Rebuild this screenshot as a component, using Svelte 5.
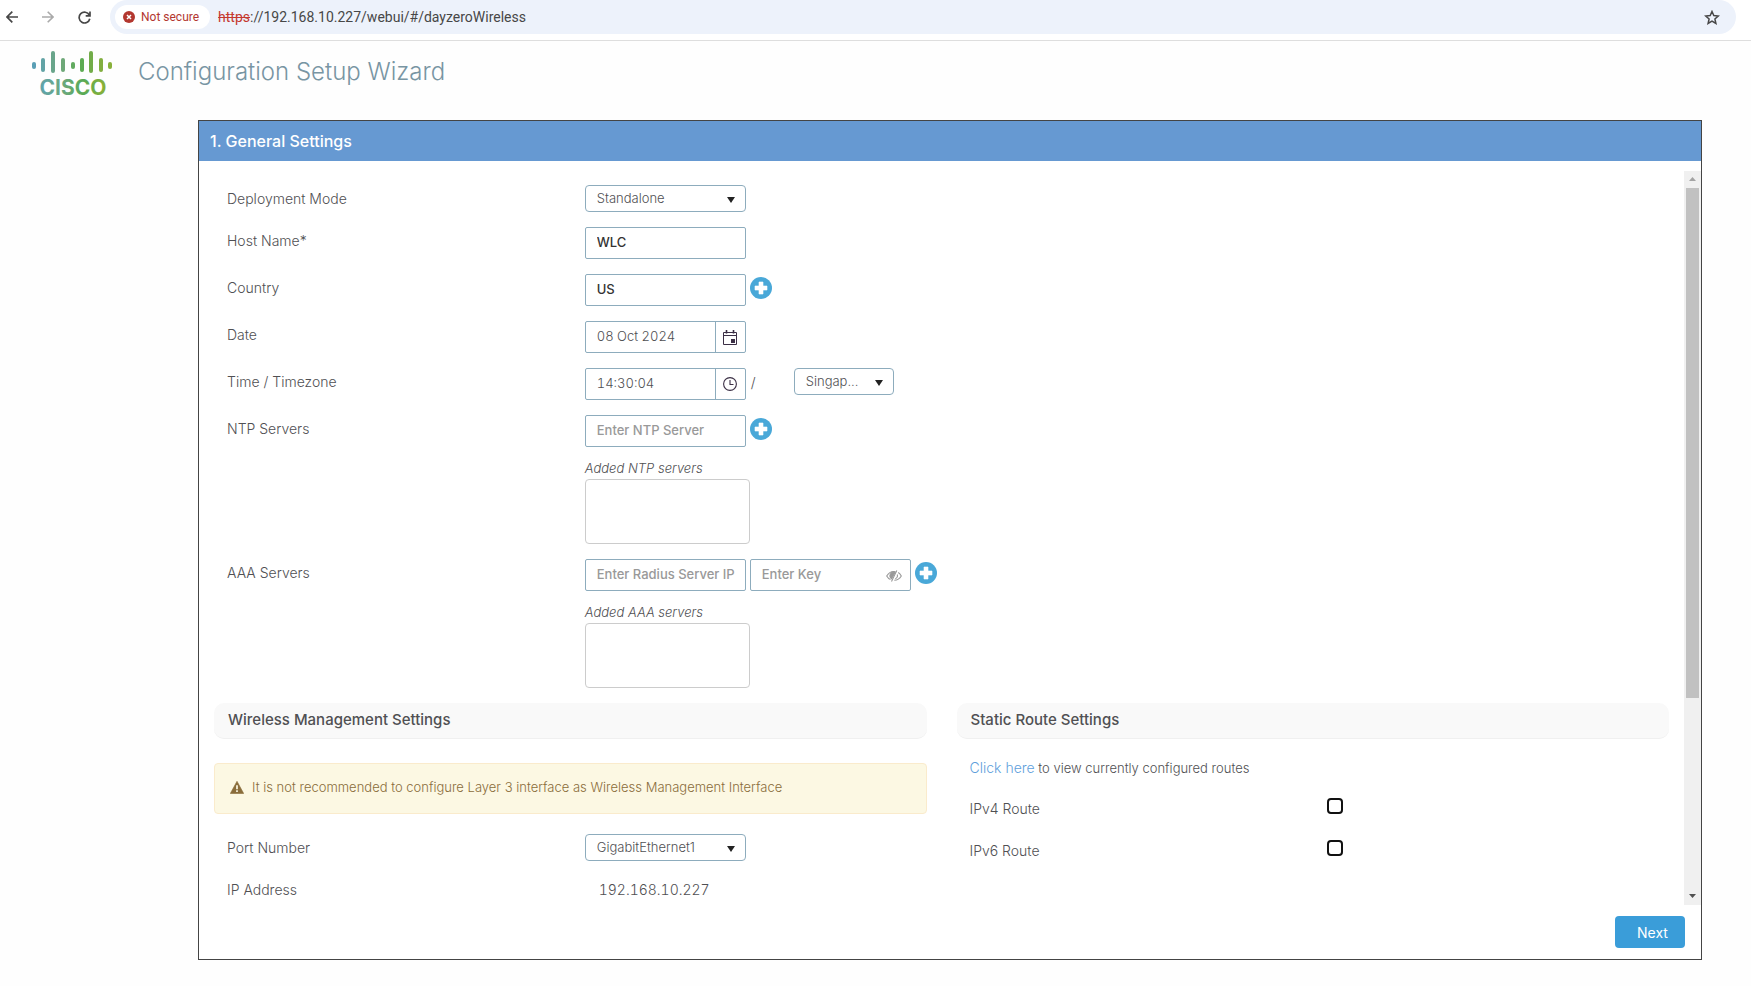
<script>
  let mode = $state('Standalone');
  let host = $state('WLC');
  let country = $state('US');
  let date = $state('08 Oct 2024');
  let time = $state('14:30:04');
  let zone = $state('Singap...');
  let port = $state('GigabitEthernet1');
  const bars = [
    [2, 11, 7, '#5a9fb5'], [11, 7, 14, '#62a3a5'], [21, 0, 22, '#69a58b'],
    [31, 7, 14, '#6ea878'], [41, 11, 7, '#62aa60'], [50, 7, 14, '#5dab53'],
    [59, 0, 22, '#72ac49'], [69, 7, 14, '#82ae40'], [78, 11, 7, '#88b03a']
  ];
</script>

{#snippet plus(label)}
  <button class="add" type="button" aria-label={label}>
    <svg width="22" height="22" viewBox="0 0 22 22">
      <circle cx="11" cy="11" r="11" fill="#49a8d8" />
      <path d="M9 5h4v4h4v4h-4v4H9v-4H5V9h4z" fill="#fff" stroke="#fff" stroke-width=".6" stroke-linejoin="round" />
    </svg>
  </button>
{/snippet}

{#snippet caret()}
  <svg class="caret" width="8" height="6" viewBox="0 0 8 6"><path d="M0 0h8L4 6z" fill="#222" /></svg>
{/snippet}

<div class="browser">
  <nav class="tools">
    <button type="button" aria-label="Back">
      <svg width="12" height="12" viewBox="0 0 12 12" fill="none" stroke="#474747" stroke-width="1.7"><path d="M12 6H1.2M6.3.7 1 6l5.3 5.3" /></svg>
    </button>
    <button type="button" aria-label="Forward">
      <svg width="12" height="12" viewBox="0 0 12 12" fill="none" stroke="#aaa" stroke-width="1.6"><path d="M0 6h10.8M5.7.7 11 6l-5.3 5.3" /></svg>
    </button>
    <button type="button" aria-label="Reload">
      <svg width="13" height="13" viewBox="0 0 13 13" fill="none" stroke="#474747" stroke-width="1.7"><path d="M11.3 4A5.4 5.4 0 1 0 11.8 7.8M12 .5v4.3H7.7" /></svg>
    </button>
  </nav>
  <div class="address">
    <button class="security" type="button">
      <svg width="12" height="12" viewBox="0 0 12 12"><circle cx="6" cy="6" r="6" fill="#b3372f" /><path d="m4 4 4 4M8 4 4 8" stroke="#fff" stroke-width="1.5" /></svg>
      Not secure
    </button>
    <span class="url"><s>https</s>://192.168.10.227/webui/#/dayzeroWireless</span>
    <button class="star" type="button" aria-label="Bookmark">
      <svg width="16" height="15" viewBox="0 0 16 15" fill="none" stroke="#474747" stroke-width="1.5"><path d="m8 1.5 1.8 4.1 4.5.4-3.4 3 1 4.4L8 11.1l-3.9 2.3 1-4.4-3.4-3 4.5-.4z" /></svg>
    </button>
  </div>
</div>

<header class="brand">
  <svg class="logo" width="81" height="52" viewBox="0 0 81 52" role="img" aria-label="Cisco">
    <defs>
      <linearGradient id="word" x1="0" x2="1" y1="0" y2="0">
        <stop offset="0" stop-color="#5fa3ad" />
        <stop offset=".35" stop-color="#6ca87e" />
        <stop offset=".65" stop-color="#58aa55" />
        <stop offset="1" stop-color="#8db135" />
      </linearGradient>
    </defs>
    {#each bars as [x, y, h, c]}
      <rect x={x - 2} {y} width="4" height={h} rx="2" fill={c} />
    {/each}
    <text x="41" y="44" text-anchor="middle" fill="url(#word)">CISCO</text>
  </svg>
  <h1>Configuration Setup Wizard</h1>
</header>

<main class="panel">
  <h2>1. General Settings</h2>
  <div class="body">
    <form class="content" id="setup" onsubmit={(e) => e.preventDefault()}>
      <section class="general">
        <div class="row">
          <label for="mode">Deployment Mode</label>
          <div class="controls">
            <div class="select"><select id="mode" bind:value={mode}><option>Standalone</option></select>{@render caret()}</div>
          </div>
        </div>
        <div class="row">
          <label for="host">Host Name*</label>
          <div class="controls"><input class="text" id="host" type="text" bind:value={host} /></div>
        </div>
        <div class="row">
          <label for="country">Country</label>
          <div class="controls"><input class="text" id="country" type="text" bind:value={country} />{@render plus('Add country')}</div>
        </div>
        <div class="row">
          <label for="date">Date</label>
          <div class="controls">
            <div class="picker">
              <input id="date" type="text" bind:value={date} />
              <button type="button" aria-label="Choose date">
                <svg width="14" height="15" viewBox="0 0 14 15" fill="none" stroke="#3b2f45"><path d="M.5 2.5h13v12H.5zM.5 5.5h13" /><path d="M3.5 0v3.5M10.5 0v3.5" stroke-width="1.6" /><path d="M8 9h4v4H8z" fill="#3b2f45" stroke="none" /></svg>
              </button>
            </div>
          </div>
        </div>
        <div class="row">
          <label for="time">Time / Timezone</label>
          <div class="controls">
            <div class="picker">
              <input id="time" type="text" bind:value={time} />
              <button type="button" aria-label="Choose time">
                <svg width="14" height="14" viewBox="0 0 14 14" fill="none" stroke="#3b2f45" stroke-width="1.1"><circle cx="7" cy="7" r="6.4" /><path d="M7 3v4.5h3.5" /></svg>
              </button>
            </div>
            <span class="slash">/</span>
            <div class="select zone"><select aria-label="Timezone" bind:value={zone}><option>Singap...</option></select>{@render caret()}</div>
          </div>
        </div>
        <div class="row">
          <label for="ntp">NTP Servers</label>
          <div class="controls"><input class="text" id="ntp" type="text" placeholder="Enter NTP Server" />{@render plus('Add NTP server')}</div>
          <div class="added"><em>Added NTP servers</em><div class="list"></div></div>
        </div>
        <div class="row">
          <label for="aaa">AAA Servers</label>
          <div class="controls">
            <input class="text" id="aaa" type="text" placeholder="Enter Radius Server IP" />
            <div class="key">
              <input class="text" type="password" aria-label="Key" placeholder="Enter Key" />
              <button type="button" aria-label="Show key">
                <svg width="16" height="12" viewBox="0 0 16 12" fill="none" stroke="#999" stroke-width="1.1"><path d="M9.5 1.7C5.8.9 2.8 2.6.7 6c1 1.7 2.3 2.9 3.8 3.6M12.2 2.5C13.5 3.3 14.5 4.5 15.3 6c-1.6 2.7-4 4.2-7 4.3" /><path d="M9 2.3A3.7 3.7 0 0 0 5.6 8.8z" fill="#999" /><path d="M10.8.5 5.5 11.5M11.3 4.500c.5 2-.4 3.6-2 4.3" /></svg>
              </button>
            </div>
            {@render plus('Add AAA server')}
          </div>
          <div class="added"><em>Added AAA servers</em><div class="list"></div></div>
        </div>
      </section>

      <section class="half">
        <h3>Wireless Management Settings</h3>
        <p class="alert" role="alert">
          <svg width="14" height="13" viewBox="0 0 14 13"><path d="M7 .3 13.7 12.5H.3z" fill="#8a6d3b" stroke="#8a6d3b" stroke-width=".6" stroke-linejoin="round" /><path d="M7 4.2v4M7 9.3v1.7" stroke="#fcf8e3" stroke-width="1.7" /></svg>
          It is not recommended to configure Layer 3 interface as Wireless Management Interface
        </p>
        <div class="rows">
          <div class="row">
            <label for="port">Port Number</label>
            <div class="controls"><div class="select"><select id="port" bind:value={port}><option>GigabitEthernet1</option></select>{@render caret()}</div></div>
          </div>
          <div class="row">
            <span class="name">IP Address</span>
            <output class="value">192.168.10.227</output>
          </div>
        </div>
      </section>

      <section class="half">
        <h3>Static Route Settings</h3>
        <p class="routes"><a href="#routes">Click here</a> to view currently configured routes</p>
        <div class="rows">
          <div class="row">
            <label for="v4">IPv4 Route</label>
            <div class="controls"><input id="v4" type="checkbox" /></div>
          </div>
          <div class="row">
            <label for="v6">IPv6 Route</label>
            <div class="controls"><input id="v6" type="checkbox" /></div>
          </div>
        </div>
      </section>
    </form>

    <div class="scrollbar" aria-hidden="true">
      <svg width="7" height="4" viewBox="0 0 7 4"><path d="M0 4h7L3.5 0z" fill="#a3a3a3" /></svg>
      <div class="track"><div class="thumb"></div></div>
      <svg width="7" height="4" viewBox="0 0 7 4"><path d="M0 0h7L3.5 4z" fill="#505050" /></svg>
    </div>
  </div>
  <footer><button class="next" type="submit" form="setup">Next</button></footer>
</main>

<style>
  :global(body) {
    background: #fefefe;
    color: #505053;
    font-family: Inter, 'Liberation Sans', sans-serif;
    font-size: 14px;
    font-weight: 300;
  }
  button, input, select { font: inherit; color: inherit; box-sizing: border-box; }
  button { border: 0; padding: 0; background: none; cursor: pointer; }
  svg { display: block; flex: none; }
  h1, h2, h3, p { margin: 0; }

  .browser {
    display: flex;
    height: 40px;
    padding-right: 15px;
    border-bottom: 1px solid #dedede;
    background: #fff;
    font-family: Roboto, sans-serif;
    font-weight: 400;
  }
  .tools { display: flex; align-items: center; gap: 24px; height: 34px; padding: 0 19px 0 6px; }
  .address {
    flex: 1;
    display: flex;
    align-items: center;
    height: 34px;
    padding: 0 16px 0 5px;
    border-radius: 17px;
    background: #edf2fb;
  }
  .security {
    display: flex;
    align-items: center;
    gap: 6px;
    height: 24px;
    padding: 0 11px 0 8px;
    border-radius: 12px;
    background: #fff;
    color: #b3372f;
    font-size: 12px;
  }
  .url { flex: 1; margin-left: 8px; color: #474747; font-size: 14px; }
  .url s { color: #c5392f; }

  .brand { display: flex; align-items: flex-start; gap: 25px; padding: 10px 32px 0; }
  .logo text { font: 700 21px Inter, sans-serif; }
  .brand h1 { padding-top: 5px; color: #7895a3; font-size: 24px; line-height: 32px; font-weight: 300; }

  .panel {
    margin: 17px 49px 0 198px;
    border: 1px solid #444;
    background: #fff;
  }
  h2 {
    padding-left: 11px;
    background: #6699d2;
    color: #fff;
    font-size: 16px;
    line-height: 40px;
    font-weight: 500;
  }
  .body { display: flex; padding-top: 10px; }
  .content {
    flex: 1;
    display: grid;
    grid-template-columns: repeat(2, minmax(0, 1fr));
    column-gap: 30px;
    row-gap: 15px;
    padding: 15px 15px 2px;
  }
  .general { grid-column: 1; }
  .general, .rows { display: grid; row-gap: 15px; }
  .general { margin-top: -1px; }
  .half { grid-row: 2; }
  .row {
    display: grid;
    grid-template-columns: repeat(2, minmax(0, 1fr));
    column-gap: 16px;
    align-items: start;
    padding-left: 13px;
  }
  .row label, .name, .value { line-height: 27px; }
  .value { padding-left: 14px; font-variant-numeric: tabular-nums; }
  .controls { display: flex; }

  .select { position: relative; width: 161px; }
  .select select {
    display: block;
    appearance: none;
    width: 100%;
    height: 27px;
    padding: 0 24px 2px 11px;
    border: 1px solid #8dacbd;
    border-radius: 4px;
    background: #fff;
    font-size: 13px;
  }
  .caret { position: absolute; right: 11px; top: 12px; pointer-events: none; }
  .zone { width: 100px; }
  .slash { width: 48px; padding-left: 5px; line-height: 30px; box-sizing: border-box; }
  .text, .picker {
    flex: none;
    width: 161px;
    height: 32px;
    border: 1px solid #8dacbd;
    border-radius: 2px;
    background: #fff;
    box-sizing: border-box;
  }
  .text { padding: 0 10px 2px 11px; color: #333; font-size: 13px; font-weight: 500; }
  .text::placeholder { color: #999; opacity: 1; }
  .picker { display: flex; }
  .picker input { flex: 1; min-width: 0; padding: 0 8px 2px 11px; border: 0; background: none; font-size: 13px; font-variant-numeric: tabular-nums; }
  .picker button { display: grid; place-items: center; width: 30px; border-left: 1px solid #8dacbd; }
  .key { position: relative; flex: none; margin-left: 4px; }
  .key button { position: absolute; right: 9px; top: 11px; }
  .add { flex: none; height: 22px; margin: 3px 0 0 4px; }

  .added { grid-column: 2; }
  .added em { display: block; margin: 11px 0 1px; font-size: 13px; line-height: 20px; }
  .list { width: 165px; height: 65px; border: 1px solid #ccc; border-radius: 4px; box-sizing: border-box; }

  h3 {
    height: 36px;
    padding-left: 14px;
    border-bottom: 1px solid #f0f0f0;
    border-radius: 10px;
    background: #f9f9f9;
    box-sizing: border-box;
    font-size: 15px;
    line-height: 34px;
    font-weight: 500;
  }
  .alert {
    display: flex;
    align-items: center;
    gap: 8px;
    margin: 24px 0 20px;
    padding: 14px 15px 16px;
    border: 1px solid #faebcc;
    border-radius: 4px;
    background: #fcf8e3;
    color: #8a6d3b;
    font-size: 13px;
    line-height: 19px;
  }
  .routes { padding: 19px 0 17px 13px; font-size: 13px; line-height: 20px; }
  .routes a { color: #5f9fdc; font-size: 14px; text-decoration: none; }
  input[type='checkbox'] {
    appearance: none;
    width: 16px;
    height: 16px;
    margin: 3px 0 0;
    border: 2px solid #111;
    border-radius: 4px;
    background: #fff;
  }

  .scrollbar {
    display: flex;
    flex-direction: column;
    align-items: center;
    gap: 7px;
    width: 17px;
    padding: 6px 0 7px;
    background: #f0f0f0;
    box-sizing: border-box;
  }
  .track { flex: 1; align-self: stretch; padding: 0 2px; }
  .thumb { height: 73%; background: #c1c1c1; }

  footer { display: flex; justify-content: flex-end; padding: 11px 16px; }
  .next { width: 70px; height: 32px; padding-left: 5px; border-radius: 4px; background: #3a9dd9; color: #fff; font-size: 14px; font-weight: 400; }
</style>
